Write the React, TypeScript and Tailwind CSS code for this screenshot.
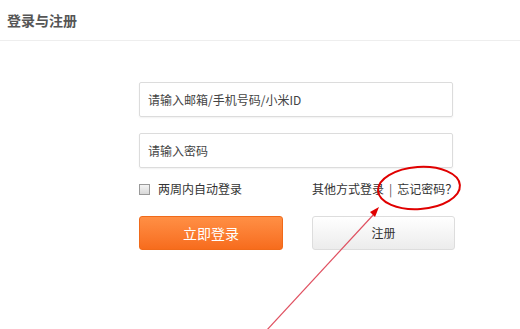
import React from "react";

const font = { fontFamily: '"Noto Sans CJK SC", "Noto Sans", sans-serif' };

export default function App() {
  return (
    <div className="relative h-[329px] w-[520px] overflow-hidden bg-white text-[12px]" style={font}>
      <div className="flex h-[41px] items-center border-b border-[#eeeeee] px-[7px]">
        <h1 className="text-[14px] font-bold text-[#555]">登录与注册</h1>
      </div>

      <div className="ml-[139px] mt-[41px] flex w-[316px] flex-col">
        <input
          placeholder="请输入邮箱/手机号码/小米ID"
          className="h-[35px] w-[314px] rounded-[2px] border border-[#dcdcdc] px-[8px] text-[12px] text-[#333] outline-none placeholder:text-[#444] shadow-[0_1px_2px_rgba(0,0,0,0.06)]"
        />
        <input
          placeholder="请输入密码"
          className="mt-[16px] h-[35px] w-[314px] rounded-[2px] border border-[#dcdcdc] px-[8px] text-[12px] text-[#333] outline-none placeholder:text-[#444] shadow-[0_1px_2px_rgba(0,0,0,0.06)]"
        />

        <div className="mt-[13px] flex h-[16px] items-center whitespace-nowrap text-[#333]">
          <span className="mr-[8px] h-[11px] w-[11px] shrink-0 border border-[#999] bg-gradient-to-b from-[#f4f4f4] to-[#d8d8d8]" />
          <span>两周内自动登录</span>
          <span className="ml-[70px]">其他方式登录</span>
          <span className="mx-[5px] text-[#555]">|</span>
          <span>忘记密码？</span>
        </div>

        <div className="mt-[19px] flex gap-[29px]">
          <button className="h-[34px] w-[144px] rounded-[3px] border border-[#f06a1a] bg-gradient-to-b from-[#ff8f44] to-[#f76c1c] text-[14px] text-white">
            立即登录
          </button>
          <button className="h-[34px] w-[143px] rounded-[3px] border border-[#dddddd] bg-gradient-to-b from-[#ffffff] to-[#ececec] text-[12px] text-[#333]">
            注册
          </button>
        </div>
      </div>

      <svg className="pointer-events-none absolute left-0 top-0" width="520" height="329" viewBox="0 0 520 329">
        <ellipse cx="419" cy="188" rx="41" ry="21" fill="none" stroke="#e00000" strokeWidth="2" transform="rotate(-4 419 188)" />
        <line x1="266" y1="331" x2="375" y2="213" stroke="#e05060" strokeWidth="1.2" />
        <polygon points="379,207 370,212 375,217" fill="#e00000" />
      </svg>
    </div>
  );
}
